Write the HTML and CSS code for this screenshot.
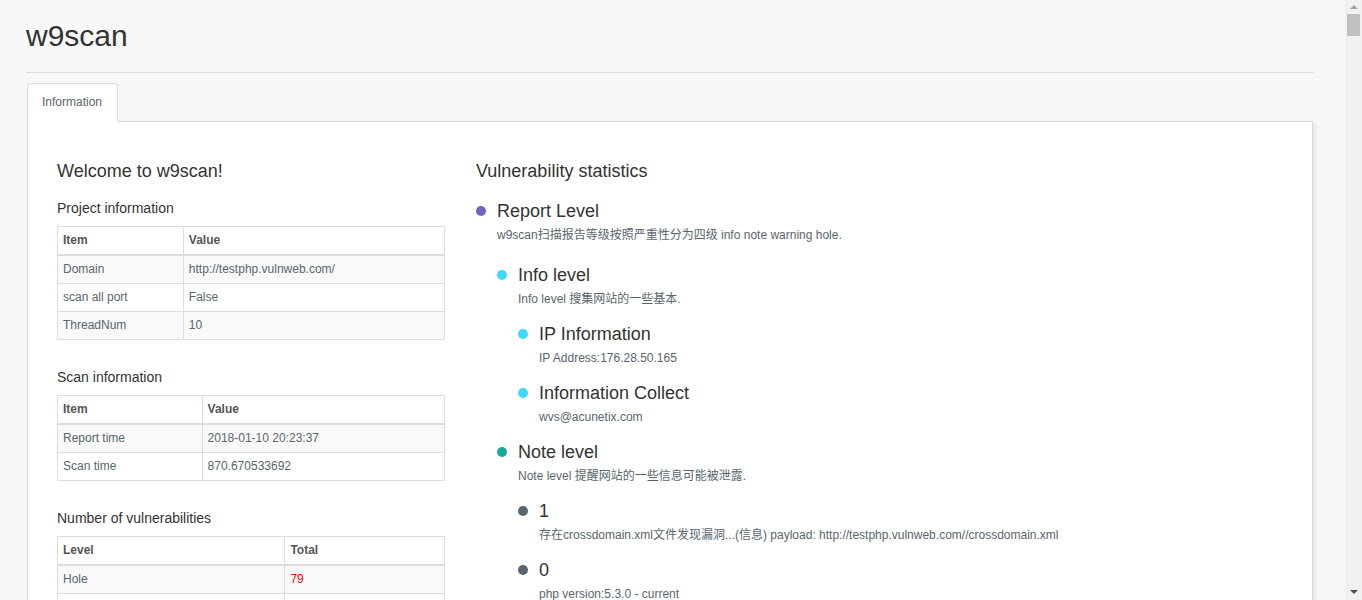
FILE: index.html
```html
<!DOCTYPE html>
<html lang="en">
<head>
<meta charset="utf-8">
<title>w9scan</title>
<link rel="stylesheet" href="styles.css">
</head>
<body>
<div class="container">
  <header class="page-header">
    <h1 class="brand">w9scan</h1>
  </header>
  <nav class="tabs">
    <a class="tab active">Information</a>
  </nav>
  <section class="panel">
    <div class="col-left">
      <h3 class="title">Welcome to w9scan!</h3>
      <h4 class="sub first">Project information</h4>
      <table class="tbl">
        <thead><tr><th>Item</th><th>Value</th></tr></thead>
        <tbody>
          <tr><td>Domain</td><td>http://testphp.vulnweb.com/</td></tr>
          <tr><td>scan all port</td><td>False</td></tr>
          <tr><td>ThreadNum</td><td>10</td></tr>
        </tbody>
      </table>
      <h4 class="sub">Scan information</h4>
      <table class="tbl">
        <thead><tr><th>Item</th><th>Value</th></tr></thead>
        <tbody>
          <tr><td>Report time</td><td>2018-01-10 20:23:37</td></tr>
          <tr><td>Scan time</td><td>870.670533692</td></tr>
        </tbody>
      </table>
      <h4 class="sub">Number of vulnerabilities</h4>
      <table class="tbl">
        <thead><tr><th>Level</th><th>Total</th></tr></thead>
        <tbody>
          <tr><td>Hole</td><td class="red">79</td></tr>
          <tr><td>Warning</td><td>12</td></tr>
          <tr><td>Note</td><td>2</td></tr>
          <tr><td>Info</td><td>2</td></tr>
        </tbody>
      </table>
    </div>
    <div class="col-right">
      <h3 class="title">Vulnerability statistics</h3>
      <ul class="tree top">
        <li class="node">
          <div class="head"><span class="dot purple"></span><span class="label">Report Level</span></div>
          <p class="desc">w9scan扫描报告等级按照严重性分为四级 info note warning hole.</p>
          <ul class="tree lvl">
            <li class="node">
              <div class="head"><span class="dot cyan"></span><span class="label">Info level</span></div>
              <p class="desc">Info level 搜集网站的一些基本.</p>
              <ul class="tree">
                <li class="node">
                  <div class="head"><span class="dot cyan"></span><span class="label">IP Information</span></div>
                  <p class="desc">IP Address:176.28.50.165</p>
                </li>
                <li class="node">
                  <div class="head"><span class="dot cyan"></span><span class="label">Information Collect</span></div>
                  <p class="desc">wvs@acunetix.com</p>
                </li>
              </ul>
            </li>
            <li class="node">
              <div class="head"><span class="dot teal"></span><span class="label">Note level</span></div>
              <p class="desc">Note level 提醒网站的一些信息可能被泄露.</p>
              <ul class="tree">
                <li class="node">
                  <div class="head"><span class="dot grey"></span><span class="label">1</span></div>
                  <p class="desc">存在crossdomain.xml文件发现漏洞...(信息) payload: http://testphp.vulnweb.com//crossdomain.xml</p>
                </li>
                <li class="node">
                  <div class="head"><span class="dot grey"></span><span class="label">0</span></div>
                  <p class="desc">php version:5.3.0 - current</p>
                </li>
              </ul>
            </li>
            <li class="node">
              <div class="head"><span class="dot orange"></span><span class="label">Warning level</span></div>
              <p class="desc">Warning level 可能存在的安全风险.</p>
            </li>
            <li class="node">
              <div class="head"><span class="dot red-dot"></span><span class="label">Hole level</span></div>
              <p class="desc">Hole level 严重的安全漏洞.</p>
            </li>
          </ul>
        </li>
      </ul>
    </div>
  </section>
</div>
<div class="fake-scrollbar" aria-hidden="true">
  <span class="sb-arrow sb-up"></span>
  <span class="sb-thumb"></span>
  <span class="sb-fill"></span>
  <span class="sb-arrow sb-down"></span>
</div>
</body>
</html>
```

FILE: styles.css
```css
html, body {
  margin: 0;
  padding: 0;
}
body {
  background: #f8f8f8;
  font-family: "Liberation Sans", Arial, "Noto Sans CJK SC", sans-serif;
  color: #58666e;
  font-size: 12px;
}
.container {
  width: 1288px;
  margin-left: 26px;
  padding-bottom: 40px;
}
.page-header {
  padding-top: 19px;
  padding-bottom: 20px;
  border-bottom: 1px solid #dedede;
}
.brand {
  margin: 0;
  font-size: 30px;
  line-height: 33px;
  font-weight: normal;
  color: #333;
}
.tabs {
  display: flex;
  margin-top: 10px;
  padding-left: 1px;
}
.tab {
  display: block;
  height: 38px;
  line-height: 37px;
  padding: 0 15px 0 14px;
  border: 1px solid #ddd;
  border-bottom: none;
  border-radius: 4px 4px 0 0;
  background: #fff;
  color: #58666e;
  font-size: 12px;
  position: relative;
  z-index: 2;
  margin-bottom: -1px;
}
.panel {
  margin: 0 1px;
  background: #fff;
  border: 1px solid #d8d8d8;
  box-shadow: 2px 2px 6px rgba(0, 0, 0, 0.09);
  padding: 39px 29px 40px 29px;
  display: flex;
  gap: 31px;
  position: relative;
  z-index: 1;
}
.col-left {
  width: 388px;
  flex: none;
}
.col-right {
  flex: 1;
}
.title {
  margin: 0;
  font-size: 18px;
  line-height: 20px;
  font-weight: normal;
  color: #333;
}
.sub {
  margin: 29px 0 10px;
  font-size: 14px;
  line-height: 16px;
  font-weight: normal;
  color: #333;
}
.sub.first {
  margin-top: 19px;
}
.tbl {
  width: 100%;
  border-collapse: collapse;
  border: 1px solid #ddd;
  font-size: 12px;
  color: #58666e;
}
.tbl th, .tbl td {
  padding: 5px;
  line-height: 17px;
  text-align: left;
  border: 1px solid #ddd;
}
.tbl th {
  font-weight: bold;
  border-bottom: 2px solid #ddd;
  color: #555;
}
.tbl tbody tr:nth-child(odd) {
  background: #f9f9f9;
}
.red {
  color: #f00;
}
.tree {
  list-style: none;
  margin: 0;
  padding: 0 0 0 21px;
}
.tree.top {
  padding-left: 0;
  margin-top: 20px;
}
.tree.top > .node > .tree {
  margin-top: 21px;
}
.tree .tree {
  margin-top: 16px;
}
.node + .node {
  margin-top: 16px;
}
.head {
  display: flex;
  align-items: center;
  height: 20px;
}
.dot {
  width: 10px;
  height: 10px;
  border-radius: 50%;
  flex: none;
  margin-right: 11px;
}
.purple { background: #7266ba; }
.cyan { background: #3dd9f6; }
.teal { background: #19a99c; }
.grey { background: #58666e; }
.orange { background: #fad733; }
.red-dot { background: #f05050; }
.label {
  font-size: 18px;
  line-height: 20px;
  color: #333;
}
.desc {
  margin: 6px 0 0 21px;
  font-size: 12px;
  line-height: 17px;
  color: #58666e;
}

/* browser scrollbar drawn over the right edge, as in the reference */
.fake-scrollbar {
  position: fixed;
  top: 0;
  right: 0;
  width: 17px;
  height: 100%;
  background: #f1f1f1;
  z-index: 10;
  display: flex;
  flex-direction: column;
  align-items: center;
}
.sb-arrow {
  flex: none;
  width: 0;
  height: 0;
  border-left: 4px solid transparent;
  border-right: 4px solid transparent;
}
.sb-up {
  margin-top: 5px;
  border-bottom: 4px solid #a3a3a3;
}
.sb-thumb {
  flex: none;
  margin-top: 5px;
  width: 13px;
  height: 22px;
  background: #c1c1c1;
}
.sb-fill {
  flex: 1;
}
.sb-down {
  margin-bottom: 6px;
  border-top: 4px solid #505050;
}
```
